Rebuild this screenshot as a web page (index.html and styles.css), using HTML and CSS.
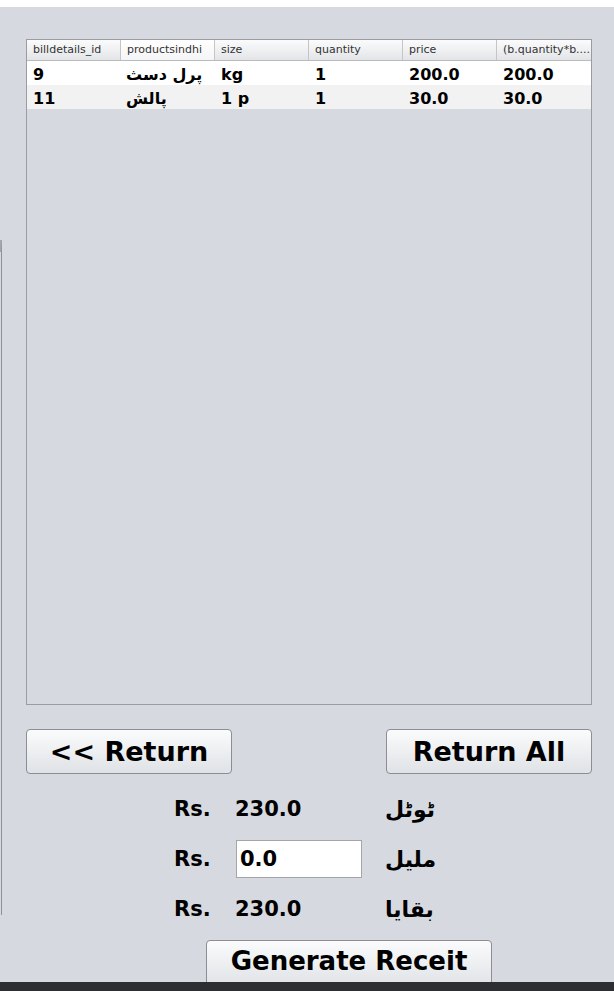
FILE: index.html
```html
<!DOCTYPE html>
<html lang="en">
<head>
<meta charset="utf-8">
<title>Bill Return</title>
<link rel="stylesheet" href="styles.css">
</head>
<body>
<div class="top-strip"></div>
<div class="frame">
  <div class="edge"><div class="edge-line"></div></div>
  <div class="panel">
    <div class="table">
      <div class="thead">
        <div class="th">billdetails_id</div>
        <div class="th th-hi">productsindhi</div>
        <div class="th">size</div>
        <div class="th">quantity</div>
        <div class="th">price</div>
        <div class="th">(b.quantity*b....</div>
      </div>
      <div class="tr">
        <div class="td">9</div>
        <div class="td ar">پرل دسث</div>
        <div class="td">kg</div>
        <div class="td">1</div>
        <div class="td">200.0</div>
        <div class="td">200.0</div>
      </div>
      <div class="tr tr-alt">
        <div class="td">11</div>
        <div class="td ar">پالش</div>
        <div class="td">1 p</div>
        <div class="td">1</div>
        <div class="td">30.0</div>
        <div class="td">30.0</div>
      </div>
    </div>
    <div class="actions">
      <button class="btn btn-side">&lt;&lt; Return</button>
      <button class="btn btn-side">Return All</button>
    </div>
    <div class="summary">
      <div class="lbl">Rs.</div>
      <div class="val">230.0</div>
      <div class="ur">ٹوٹل</div>
      <div class="lbl">Rs.</div>
      <div class="val"><input class="field" type="text" value="0.0"></div>
      <div class="ur">مليل</div>
      <div class="lbl">Rs.</div>
      <div class="val">230.0</div>
      <div class="ur">بقايا</div>
    </div>
    <div class="gen-wrap">
      <button class="btn btn-gen">Generate Receit</button>
    </div>
  </div>
</div>
<div class="taskbar"></div>
</body>
</html>
```
FILE: styles.css
```css
* { box-sizing: border-box; }
html, body { margin: 0; padding: 0; }
body {
  width: 614px;
  height: 991px;
  overflow: hidden;
  background: #d6d9df;
  font-family: "DejaVu Sans", "Noto Sans", sans-serif;
  color: #000;
}
.top-strip { height: 7px; background: #ffffff; }
.frame { display: flex; height: 975px; overflow: hidden; }
.edge { width: 3px; flex: none; }
.edge-line {
  margin-top: 233px;
  height: 675px;
  width: 2px;
  border-right: 1px solid #8f9297;
  border-top: 12px solid #a3a6ab;
}
.panel { flex: 1; padding: 32px 22px 0 23px; display: flex; flex-direction: column; }
.panel > * { flex: none; }

.table {
  height: 666px;
  border: 1px solid #9a9ca1;
  background: #d6d9df;
}
.thead, .tr { display: grid; grid-template-columns: repeat(6, 94px); }
.thead {
  height: 21px;
  background: linear-gradient(#fbfbfc, #eceef0 60%, #e2e4e7);
  border-bottom: 1px solid #b9bbbf;
}
.th {
  font-size: 11px;
  color: #333;
  line-height: 20px;
  padding-left: 6px;
  border-right: 1px solid #c3c5c9;
  white-space: nowrap;
  overflow: hidden;
}
.th:last-child { border-right: none; }
.th-hi { background: linear-gradient(#ffffff, #f4f5f6); }
.tr { height: 24px; background: #ffffff; }
.tr-alt { background: #f2f2f2; }
.td {
  font-size: 16px;
  font-weight: bold;
  line-height: 24px;
  padding: 2px 0 0 6px;
  white-space: nowrap;
}
.td.ar { padding-left: 5px; }

.actions {
  display: flex;
  justify-content: space-between;
  margin-top: 24px;
}
.btn {
  font-family: "DejaVu Sans", sans-serif;
  font-weight: bold;
  color: #000;
  border: 1px solid #8b8e93;
  border-radius: 4px;
  background: linear-gradient(#fbfbfc, #eef0f2 45%, #dfe2e6);
  padding: 0;
}
.btn-side { width: 206px; height: 45px; font-size: 27px; }

.summary {
  margin-top: 10px;
  margin-left: 148px;
  display: grid;
  grid-template-columns: 61px 150px auto;
  grid-auto-rows: 50px;
  align-items: center;
}
.lbl, .val, .ur { font-weight: bold; font-size: 21px; }
.ur { font-size: 22px; }
.field {
  width: 126px;
  height: 38px;
  margin-left: 1px;
  border: 1px solid #a2a5aa;
  background: #fff;
  font-family: "DejaVu Sans", sans-serif;
  font-weight: bold;
  font-size: 21px;
  padding: 0 0 0 3px;
  color: #000;
}

.gen-wrap { margin-top: 6px; padding-left: 180px; }
.btn-gen { width: 286px; height: 48px; font-size: 26px; padding-bottom: 6px; }

.taskbar { position: fixed; left: 0; right: 0; bottom: 0; height: 9px; background: #2c2e31; }
```
